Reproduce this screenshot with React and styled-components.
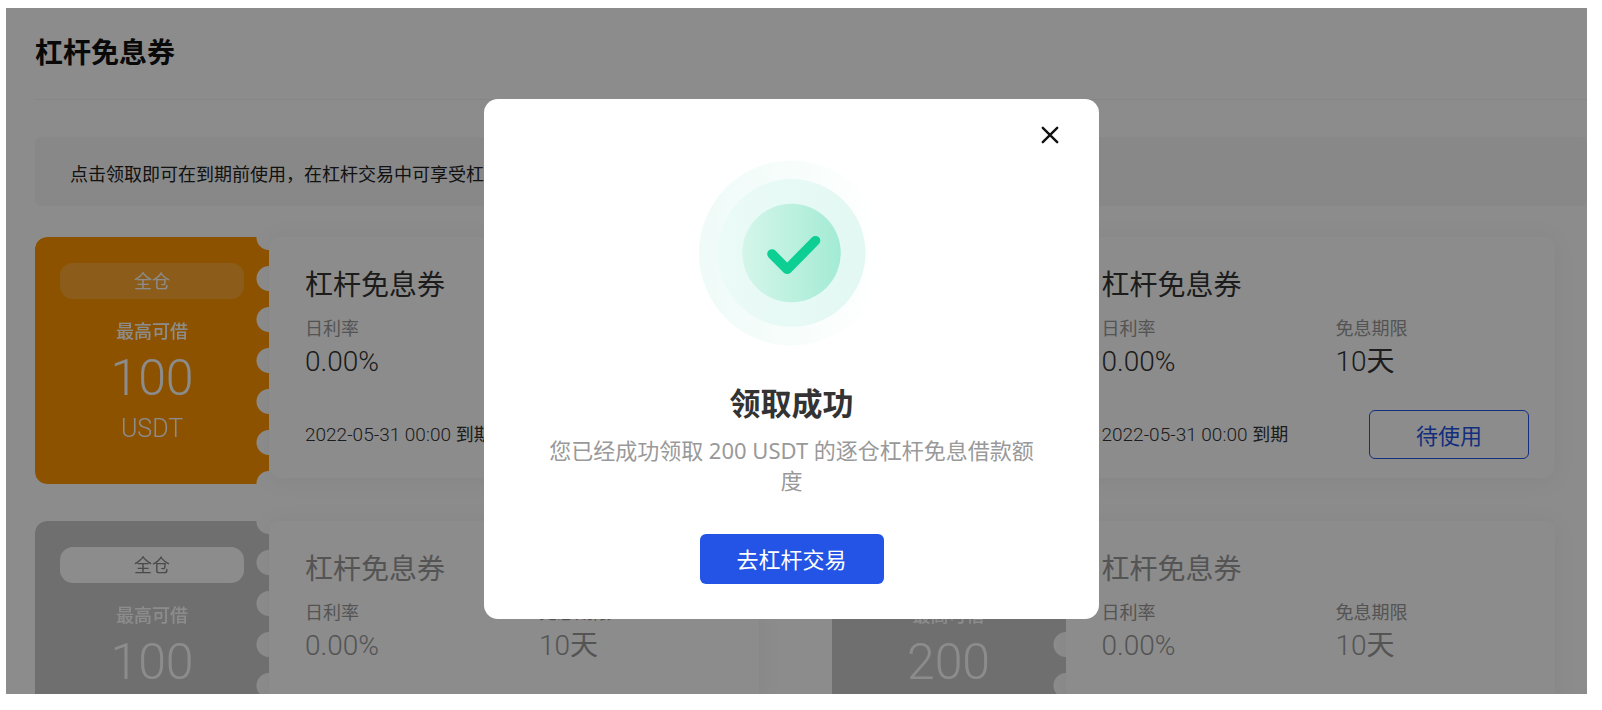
import styled, { createGlobalStyle } from "styled-components"

const coupons = [
    { id: 1, type: "全仓", amount: 100, active: true },
    { id: 2, type: "逐仓", amount: 200, active: true },
    { id: 3, type: "全仓", amount: 100, active: false },
    { id: 4, type: "全仓", amount: 200, active: false },
]

const Coupon = ({ type, amount, active }) => {
    return (
        <Card>
            <Ticket $active={active}>
                <Type $active={active}>{type}</Type>
                <Caption>最高可借</Caption>
                <Amount>{amount}</Amount>
                <Unit>USDT</Unit>
            </Ticket>
            <Detail $active={active}>
                <CardTitle>杠杆免息券</CardTitle>
                <Facts>
                    <div>
                        <Label>日利率</Label>
                        <Value>0.00%</Value>
                    </div>
                    <div>
                        <Label>免息期限</Label>
                        <Value>10<Day>天</Day></Value>
                    </div>
                </Facts>
                <Footer>
                    <Expire><Time>2022-05-31 00:00</Time> 到期</Expire>
                    <UseButton type="button" $active={active}>{active ? "待使用" : "已过期"}</UseButton>
                </Footer>
            </Detail>
        </Card>
    )
}

const SuccessIcon = () => (
    <svg width="186" height="186" viewBox="0 0 186 186" aria-hidden="true">
        <defs>
            <linearGradient id="outer">
                <stop offset="0" stopColor="#effbf8" />
                <stop offset="1" stopColor="#ffffff" />
            </linearGradient>
            <linearGradient id="middle">
                <stop offset="0" stopColor="#ebfbf7" />
                <stop offset="1" stopColor="#e3f8f2" />
            </linearGradient>
            <linearGradient id="inner">
                <stop offset="0" stopColor="#d5f6ea" />
                <stop offset="1" stopColor="#a3ebd4" />
            </linearGradient>
        </defs>
        <circle cx="92.5" cy="93" r="92.5" fill="url(#outer)" />
        <circle cx="92.5" cy="93" r="74" fill="url(#middle)" />
        <circle cx="92.5" cy="93" r="49.3" fill="url(#inner)" />
        <path d="M73 94 L88.2 109.3 L116.5 80.7" fill="none" stroke="#0ecf93" strokeWidth="9.6" strokeLinecap="round" strokeLinejoin="round" />
    </svg>
)

const App = () => {
    return (
        <Screen>
            <GlobalStyle />
            <Title>杠杆免息券</Title>
            <Notice>点击领取即可在到期前使用，在杠杆交易中可享受杠杆免息借款</Notice>
            <List>
                {coupons.map((c) => <Coupon key={c.id} {...c} />)}
            </List>
            <Overlay>
                <Modal role="dialog" aria-modal="true" aria-labelledby="modal-title">
                    <Close type="button" aria-label="关闭">
                        <svg width="18" height="18" viewBox="0 0 18 18">
                            <path d="M1.8 1.8 L16.2 16.2 M16.2 1.8 L1.8 16.2" stroke="#111" strokeWidth="2.4" strokeLinecap="round" />
                        </svg>
                    </Close>
                    <SuccessIcon />
                    <ModalTitle id="modal-title">领取成功</ModalTitle>
                    <Message>您已经成功领取 200 USDT 的逐仓杠杆免息借款额度</Message>
                    <TradeButton type="button">去杠杆交易</TradeButton>
                </Modal>
            </Overlay>
        </Screen>
    )
}

export default App


const GlobalStyle = createGlobalStyle`
    * {
        box-sizing : border-box;
    }
    body {
        margin : 0;
        padding : 8px 15px 16px 6px;
        background : #fff;
        color : #222;
        font-family : "Noto Sans", "Noto Sans CJK SC", sans-serif;
    }
    button {
        font-family : inherit;
        cursor : pointer;
    }
`
const Screen = styled.main`
    position : relative;
    height : calc(100vh - 24px);
    padding-left : 29px;
    overflow : hidden;
`
const Title = styled.h1`
    margin : 0 0 37px;
    padding : 24px 0 27px;
    border-bottom : 1px solid #f2f2f2;
    color : #111;
    font-size : 28px;
    line-height : 40px;
`
const Notice = styled.p`
    margin : 0 0 31px;
    padding : 23px 35px 17px;
    border-radius : 6px;
    background : #f7f7f7;
    font-size : 18px;
    line-height : 29px;
    white-space : nowrap;
`
const List = styled.div`
    display : grid;
    grid-template-columns : 1fr 1fr;
    gap : 37px 73px;
    padding-right : 32px;
`
const Card = styled.article`
    display : flex;
    align-items : flex-start;
`
const Ticket = styled.div`
    display : flex;
    flex-direction : column;
    align-items : center;
    flex : none;
    width : 234px;
    height : 247px;
    padding : 26px 25px 0;
    border-radius : 12px 0 0 12px;
    background : ${(p) => (p.$active ? "#ff9600" : "#cbcbcb")};
    color : #fff;
    /* notches along the tear line */
    mask : radial-gradient(circle at 100% 50%, transparent 12px, #000 13px) 0 -20px / 100% 41px repeat-y;
`
const Type = styled.span`
    align-self : stretch;
    border-radius : 13px;
    background : ${(p) => (p.$active ? "rgba(255, 255, 255, 0.19)" : "#fff")};
    color : ${(p) => (p.$active ? "#fff" : "#888")};
    font-size : 18px;
    line-height : 36px;
    text-align : center;
`
const Caption = styled.span`
    margin-top : 18px;
    font-size : 18px;
    font-weight : 500;
    line-height : 28px;
`
const Amount = styled.span`
    margin-top : 4px;
    font-family : Roboto, sans-serif;
    font-size : 50px;
    font-weight : 300;
    line-height : 58px;
`
const Unit = styled.span`
    margin-top : 6px;
    font-family : Roboto, sans-serif;
    font-size : 25px;
    font-weight : 300;
    line-height : 32px;
`
const Detail = styled.div`
    flex : 1;
    height : 241px;
    padding : 27px 26px 0 36px;
    border-radius : 12px;
    box-shadow : 0 2px 24px rgba(0, 0, 0, 0.06);
    color : ${(p) => (p.$active ? "#333" : "#999")};
`
const CardTitle = styled.h2`
    margin : 0;
    font-size : 28px;
    font-weight : 400;
    line-height : 40px;
`
const Facts = styled.div`
    display : grid;
    grid-template-columns : 234px 1fr;
    margin-top : 10px;
`
const Label = styled.div`
    color : #999;
    font-size : 18px;
    line-height : 28px;
`
const Value = styled.div`
    font-family : Roboto, "Noto Sans CJK SC", sans-serif;
    font-size : 28px;
    font-weight : 300;
    line-height : 40px;
`
const Day = styled.span`
    font-weight : 400;
`
const Footer = styled.div`
    display : flex;
    justify-content : space-between;
    align-items : center;
    margin-top : 28px;
`
const Expire = styled.span`
    font-size : 18px;
    line-height : 28px;
    white-space : nowrap;
`
const Time = styled.time`
    font-family : Roboto, sans-serif;
    font-size : 19px;
    font-weight : 300;
`
const UseButton = styled.button`
    width : 160px;
    height : 49px;
    padding : 0 0 2px;
    border : 1px solid ${(p) => (p.$active ? "#2354e6" : "#ccc")};
    border-radius : 6px;
    background : transparent;
    color : ${(p) => (p.$active ? "#2354e6" : "#999")};
    font-size : 22px;
`
const Overlay = styled.div`
    position : absolute;
    inset : 0;
    display : flex;
    justify-content : center;
    align-items : flex-start;
    padding : 91px 10px 0 0;
    background : rgba(0, 0, 0, 0.45);
`
const Modal = styled.section`
    display : flex;
    flex-direction : column;
    align-items : center;
    width : 615px;
    padding : 20px 60px 35px;
    border-radius : 14px;
    background : #fff;
`
const Close = styled.button`
    display : flex;
    align-self : flex-end;
    margin : 0 -27px 9px 0;
    padding : 7px;
    border : 0;
    background : none;
`
const ModalTitle = styled.h2`
    margin : 35px 0 0;
    color : #333;
    font-size : 31px;
    line-height : 44px;
`
const Message = styled.p`
    margin : 10px 0 0;
    color : #999;
    font-size : 22px;
    line-height : 30px;
    text-align : center;
`
const TradeButton = styled.button`
    width : 184px;
    height : 50px;
    margin-top : 39px;
    padding : 0 0 3px;
    border : 0;
    border-radius : 6px;
    background : #2354e6;
    color : #fff;
    font-size : 22px;
`
